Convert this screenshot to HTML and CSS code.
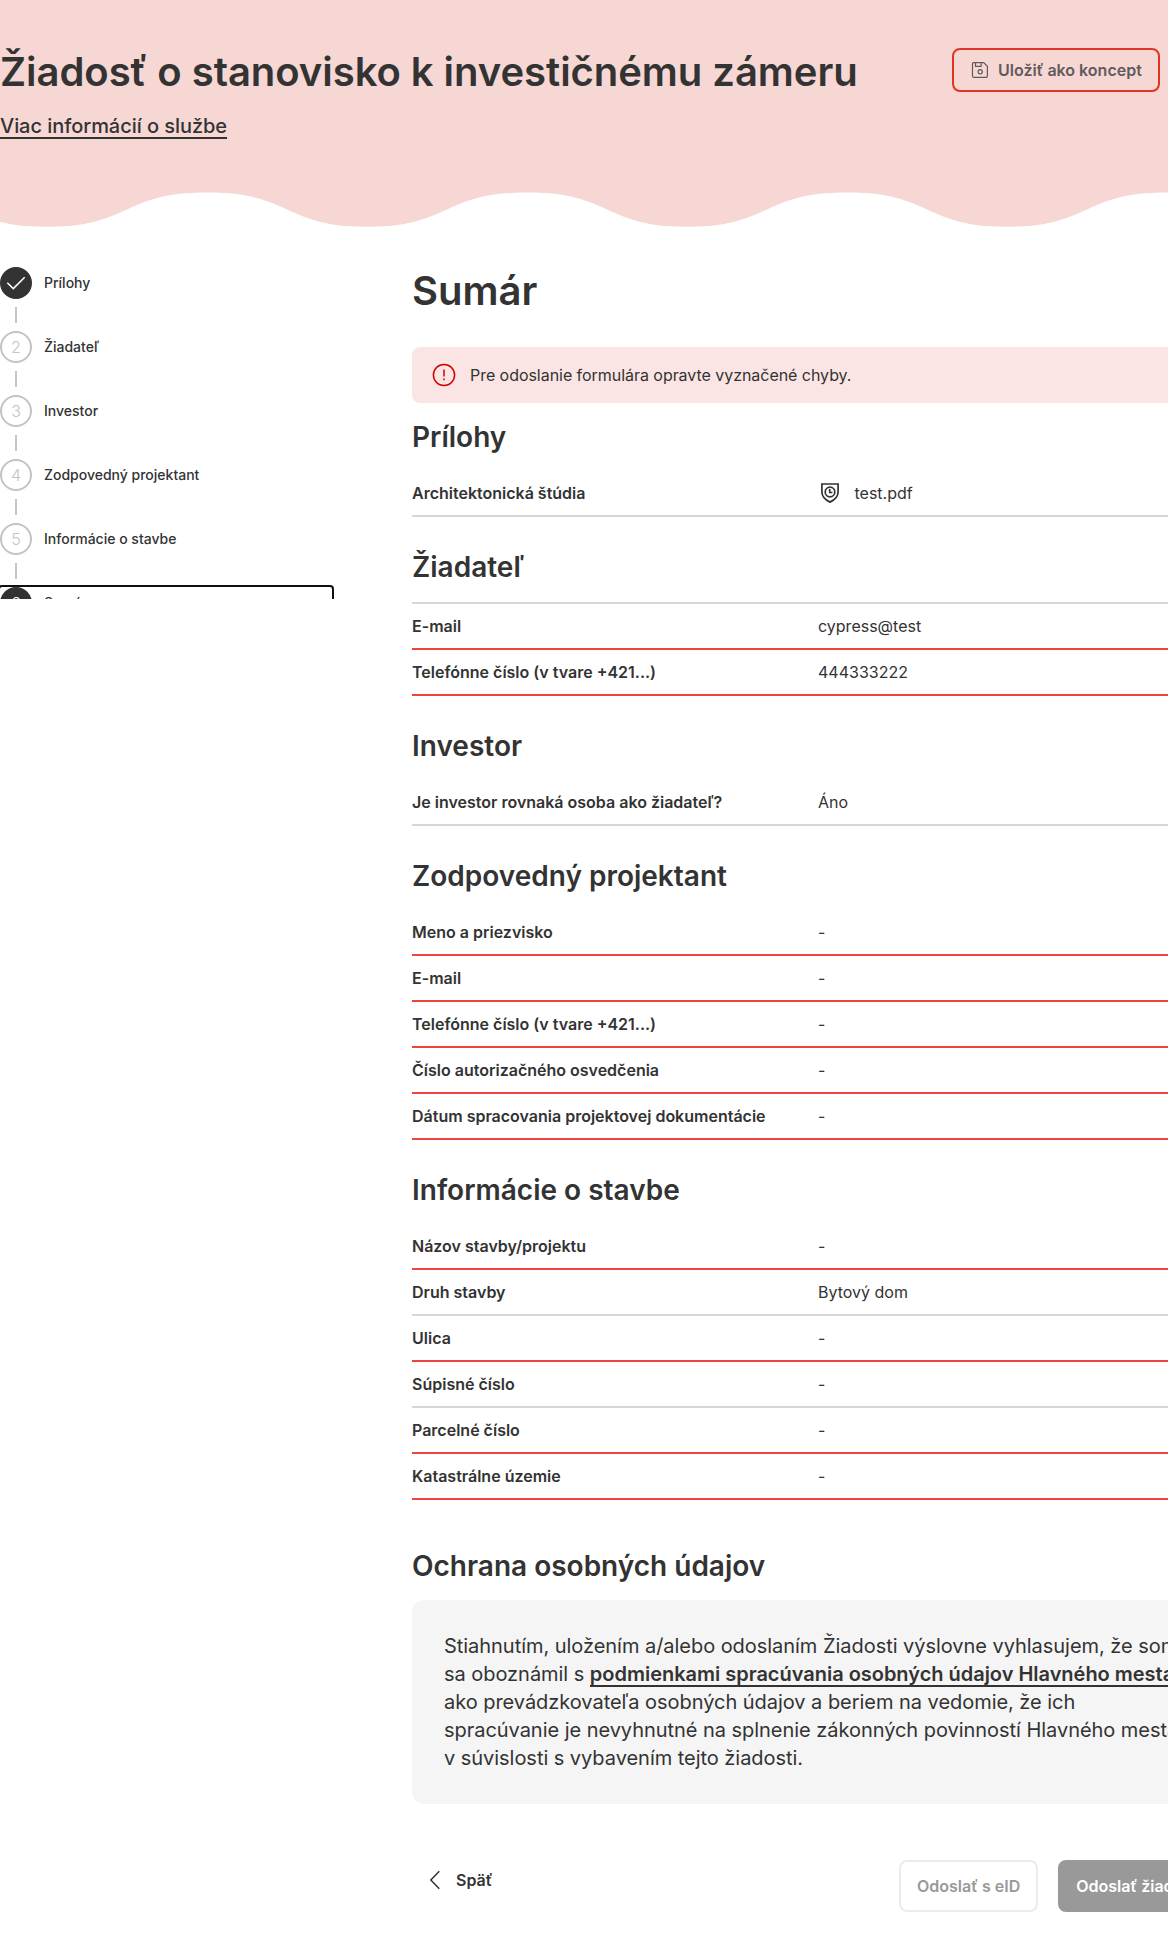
FILE: index.html
```html
<!DOCTYPE html>
<html lang="sk">
<head>
<meta charset="utf-8">
<title>Žiadosť o stanovisko k investičnému zámeru</title>
<link rel="stylesheet" href="styles.css">
</head>
<body>
<header class="hero">
  <div class="hero-content">
    <div>
      <h1 class="title">Žiadosť o stanovisko k investičnému zámeru</h1>
      <a class="more-link">Viac informácií o službe</a>
    </div>
    <button class="button save-button">
      <svg width="20" height="20" viewBox="0 0 20 20" fill="none" stroke="currentColor" stroke-width="1.2"><path d="M3.500 2.600h10.200l3.700 3.700v9.600a1.500 1.500 0 0 1-1.500 1.500H4a1.500 1.500 0 0 1-1.500-1.500V3.600a1 1 0 0 1 1-1ZM5.500 2.600v3.700h5.600V2.600"/><circle cx="10.200" cy="11.800" r="2.100"/></svg>
      Uložiť ako koncept
    </button>
  </div>
  <svg class="wave" width="1168" height="36" viewBox="0 0 1168 36">
    <defs><pattern id="wave" x="47" width="320" height="36" patternUnits="userSpaceOnUse"><path fill="#f7d7d4" d="M0 0V34.800C33 34.800 52 30.500 80 17.500S127 .6 160 .6 212 4.500 240 17.500 287 34.800 320 34.800V0Z"/></pattern></defs>
    <rect width="1168" height="36" fill="url(#wave)"/>
  </svg>
</header>
<div class="layout">
  <nav class="steps">
    <div class="step"><span class="circle filled"><svg width="20" height="16" viewBox="0 0 20 16" fill="none" stroke="#fff" stroke-width="1.5"><path d="M1.3 7.8 7.3 13.6 18.7 2.3"/></svg></span>Prílohy</div>
    <div class="connector"></div>
    <div class="step"><span class="circle">2</span>Žiadateľ</div>
    <div class="connector"></div>
    <div class="step"><span class="circle">3</span>Investor</div>
    <div class="connector"></div>
    <div class="step"><span class="circle">4</span>Zodpovedný projektant</div>
    <div class="connector"></div>
    <div class="step"><span class="circle">5</span>Informácie o stavbe</div>
    <div class="connector"></div>
    <div class="step focused"><span class="circle filled">6</span>Sumár</div>
  </nav>
  <main class="summary">
    <h2 class="summary-title">Sumár</h2>
    <div class="alert">
      <svg width="24" height="24" viewBox="0 0 24 24" fill="none" stroke="#d00000" stroke-width="1.5"><circle cx="12" cy="12" r="10.6"/><path d="M12 6.5v7M12 15.4v1.8"/></svg>
      Pre odoslanie formulára opravte vyznačené chyby.
    </div>
    <section class="section">
      <h3 class="section-title">Prílohy</h3>
      <div class="row"><b class="label">Architektonická štúdia</b><span class="file"><svg width="24" height="24" viewBox="0 0 24 24" fill="none" stroke="currentColor" stroke-width="1.700"><path d="M3.900 3h16.200v7.800c0 4.400-3.200 8.100-8.100 10.300-4.900-2.200-8.100-5.900-8.100-10.300Z"/><circle cx="12" cy="11" r="4.800"/><path d="M11.700 8v3.500h2.700"/></svg>test.pdf</span></div>
    </section>
    <section class="section">
      <h3 class="section-title">Žiadateľ</h3>
      <div class="divider"></div>
      <div class="row invalid"><b class="label">E-mail</b><span>cypress@test</span></div>
      <div class="row invalid"><b class="label">Telefónne číslo (v tvare +421...)</b><span>444333222</span></div>
    </section>
    <section class="section">
      <h3 class="section-title">Investor</h3>
      <div class="row"><b class="label">Je investor rovnaká osoba ako žiadateľ?</b><span>Áno</span></div>
    </section>
    <section class="section">
      <h3 class="section-title">Zodpovedný projektant</h3>
      <div class="row invalid"><b class="label">Meno a priezvisko</b><span>-</span></div>
      <div class="row invalid"><b class="label">E-mail</b><span>-</span></div>
      <div class="row invalid"><b class="label">Telefónne číslo (v tvare +421...)</b><span>-</span></div>
      <div class="row invalid"><b class="label">Číslo autorizačného osvedčenia</b><span>-</span></div>
      <div class="row invalid"><b class="label">Dátum spracovania projektovej dokumentácie</b><span>-</span></div>
    </section>
    <section class="section">
      <h3 class="section-title">Informácie o stavbe</h3>
      <div class="row invalid"><b class="label">Názov stavby/projektu</b><span>-</span></div>
      <div class="row"><b class="label">Druh stavby</b><span>Bytový dom</span></div>
      <div class="row invalid"><b class="label">Ulica</b><span>-</span></div>
      <div class="row"><b class="label">Súpisné číslo</b><span>-</span></div>
      <div class="row invalid"><b class="label">Parcelné číslo</b><span>-</span></div>
      <div class="row invalid"><b class="label">Katastrálne územie</b><span>-</span></div>
    </section>
    <section class="privacy">
      <h3 class="section-title">Ochrana osobných údajov</h3>
      <p class="consent">Stiahnutím, uložením a/alebo odoslaním Žiadosti výslovne vyhlasujem, že som<br>sa oboznámil s <a class="consent-link">podmienkami spracúvania osobných údajov Hlavného mesta</a><br>ako prevádzkovateľa osobných údajov a beriem na vedomie, že ich<br>spracúvanie je nevyhnutné na splnenie zákonných povinností Hlavného mesta<br>v súvislosti s vybavením tejto žiadosti.</p>
    </section>
    <div class="actions">
      <button class="button back-button"><svg width="12" height="20" viewBox="0 0 12 20" fill="none" stroke="currentColor" stroke-width="1.5"><path d="M10.300 1.300 1.800 10l8.500 8.700"/></svg>Späť</button>
      <div class="submit-group">
        <button class="button eid-button">Odoslať s eID</button>
        <button class="button submit-button">Odoslať žiadosť</button>
      </div>
    </div>
  </main>
</div>
</body>
</html>
```
FILE: styles.css
```css
* { box-sizing: border-box; }
html { overflow: hidden; }
body {
  margin: 0;
  height: 1952px;
  overflow: hidden;
  background: #fff;
  color: #333;
  font: 400 16px/24px Inter, sans-serif;
}
h1, h2, h3, p { margin: 0; }

.hero-content {
  display: flex;
  justify-content: space-between;
  align-items: flex-start;
  height: 192px;
  padding: 48px 8px 0 0;
  background: #f7d7d4;
}
.title { font-size: 40px; line-height: 48px; font-weight: 600; letter-spacing: -0.04px; }
.more-link {
  display: inline-block;
  margin-top: 19px;
  border-bottom: 2px solid #333;
  font-size: 20px;
  line-height: 22px;
  font-weight: 500;
  letter-spacing: -0.05px;
}
.wave { display: block; }

.button {
  display: flex;
  align-items: center;
  flex-shrink: 0;
  border: 2px solid transparent;
  border-radius: 8px;
  background: none;
  color: #333;
  font: 600 16px/24px Inter, sans-serif;
  white-space: nowrap;
}
.save-button {
  width: 208px;
  height: 44px;
  gap: 8px;
  padding: 0 16px;
  border-color: #dd3526;
  color: #5f5b5a;
}

.layout { display: flex; margin-top: 39px; }
.steps {
  flex: none;
  width: 412px;
  height: 332px;
  overflow: hidden;
}
.step {
  display: flex;
  align-items: center;
  gap: 12px;
  width: 332px;
  height: 32px;
  font-size: 14px;
  line-height: 20px;
  font-weight: 500;
}
.circle {
  display: flex;
  align-items: center;
  justify-content: center;
  width: 32px;
  height: 32px;
  border: 2px solid #c4c4c4;
  border-radius: 50%;
  color: #c4c4c4;
  font-size: 16px;
  font-weight: 300;
}
.filled { border-color: #333; background: #333; color: #fff; }
.connector { width: 2px; height: 16px; margin: 8px 15px; background: #c4c4c4; }
.focused { outline: 2px solid #101010; border-radius: 2px; }

.summary { flex: none; width: 812px; }
.summary-title { font-size: 40px; line-height: 48px; font-weight: 600; }
.alert {
  display: flex;
  align-items: center;
  gap: 14px;
  height: 56px;
  margin: 32px 0 16px;
  padding: 0 20px;
  border-radius: 8px;
  background: #fae5e4;
  letter-spacing: -0.045px;
}
.section { margin-bottom: 32px; }
.section-title { margin-bottom: 16px; font-size: 28px; line-height: 36px; font-weight: 600; }
.row {
  display: grid;
  grid-template-columns: 1fr 1fr;
  height: 46px;
  padding: 10px 0;
  border-bottom: 2px solid #d6d6d6;
}
.invalid { border-color: #ef4444; }
.label { font-weight: 600; }
.file { display: flex; gap: 12.5px; }
.divider { height: 2px; margin-top: 17px; background: #d6d6d6; }

.privacy { margin-top: 48px; }
.consent {
  padding: 32px;
  border-radius: 12px;
  background: #f5f5f5;
  font-size: 20px;
  line-height: 28px;
  letter-spacing: -0.04px;
  white-space: nowrap;
}
.consent-link {
  display: inline-block;
  border-bottom: 2px solid #333;
  font-weight: 600;
  line-height: 22px;
  letter-spacing: -0.02px;
}
.actions { display: flex; justify-content: space-between; margin-top: 56px; }
.back-button { height: 40px; gap: 15px; padding: 0 15px; }
.submit-group { display: flex; flex: none; gap: 20px; width: 325px; }
.eid-button { height: 52px; padding: 0 16px; border-color: #ebebeb; color: #999; }
.submit-button { height: 52px; padding: 0 16px; background: #999; border-color: #999; color: #fff; }
```
